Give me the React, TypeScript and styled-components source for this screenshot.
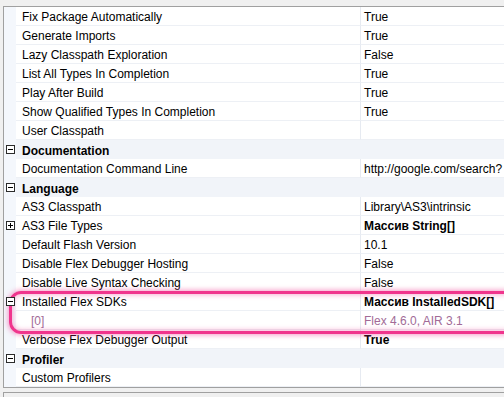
import React from "react";
import styled, { createGlobalStyle, css } from "styled-components";

const Global = createGlobalStyle`
  html, body { margin: 0; padding: 0; background: #f0f0f0; }
  body { font-family: "Liberation Sans", Arial, sans-serif; font-size: 12px; color: #000; overflow: hidden; }
`;

const Page = styled.div`
  width: 504px;
  height: 397px;
  padding: 6px 0 0 3px;
  box-sizing: border-box;
  overflow: hidden;
  display: flex;
  flex-direction: column;
  gap: 4px;
`;

const Frame = styled.div`
  position: relative;
  width: 560px;
  border-top: 1px solid #a0a0a0;
  border-left: 1px solid #a0a0a0;
  border-bottom: 1px solid #a0a0a0;
  background: #fff;
`;

const Row = styled.div<{ $cat?: boolean }>`
  display: grid;
  grid-template-columns: 12px 345px 1fr;
  height: 19px;
  ${(p) =>
    p.$cat &&
    css`
      background: #f1f4f9;
    `}
`;

const Margin = styled.div`
  background: #f4f7fc;
  display: flex;
  align-items: center;
  padding-left: 2px;
`;

const Expander = styled.div`
  width: 9px;
  height: 9px;
  box-sizing: border-box;
  border: 1px solid #2b2b2b;
  background: #fff;
  position: relative;
  z-index: 2;
  &::before {
    content: "";
    position: absolute;
    left: 1px;
    right: 1px;
    top: 3px;
    height: 1px;
    background: #000;
  }
`;

const ExpanderPlus = styled(Expander)`
  &::after {
    content: "";
    position: absolute;
    top: 1px;
    bottom: 1px;
    left: 3px;
    width: 1px;
    background: #000;
  }
`;

const cellText = css`
  display: flex;
  align-items: center;
  padding-top: 2px;
  box-sizing: border-box;
  white-space: nowrap;
  overflow: hidden;
`;

const Label = styled.div<{ $indent?: number; $muted?: boolean }>`
  ${cellText}
  padding-left: ${(p) => 6 + (p.$indent || 0)}px;
  border-bottom: 1px solid #edf0f5;
  border-right: 1px solid #e6eaf1;
  color: ${(p) => (p.$muted ? "#a26b97" : "#000")};
`;

const Value = styled.div<{ $bold?: boolean; $muted?: boolean }>`
  ${cellText}
  padding-left: 3px;
  border-bottom: 1px solid #edf0f5;
  font-weight: ${(p) => (p.$bold ? 700 : 400)};
  color: ${(p) => (p.$muted ? "#a26b97" : "#000")};
`;

const CatLabel = styled.div`
  ${cellText}
  grid-column: 2 / 4;
  padding-left: 6px;
  font-weight: 700;
`;

const Highlight = styled.div`
  position: absolute;
  z-index: 1;
  left: 5px;
  top: 284px;
  width: 600px;
  height: 43px;
  box-sizing: border-box;
  border: 3px solid #f0358d;
  border-radius: 12px;
  box-shadow: 0 0 5px 1px rgba(240, 60, 145, 0.5), inset 0 0 5px 1px rgba(240, 60, 145, 0.4);
  pointer-events: none;
`;

const HelpPane = styled.div`
  flex: 1;
  border-top: 1px solid #a0a0a0;
  border-left: 1px solid #a0a0a0;
  background: #f0f0f0;
`;

type Item =
  | { kind: "cat"; label: string }
  | {
      kind: "prop";
      label: string;
      value?: string;
      bold?: boolean;
      exp?: "+" | "-";
      sub?: boolean;
    };

const items: Item[] = [
  { kind: "prop", label: "Fix Package Automatically", value: "True" },
  { kind: "prop", label: "Generate Imports", value: "True" },
  { kind: "prop", label: "Lazy Classpath Exploration", value: "False" },
  { kind: "prop", label: "List All Types In Completion", value: "True" },
  { kind: "prop", label: "Play After Build", value: "True" },
  { kind: "prop", label: "Show Qualified Types In Completion", value: "True" },
  { kind: "prop", label: "User Classpath", value: "" },
  { kind: "cat", label: "Documentation" },
  { kind: "prop", label: "Documentation Command Line", value: "http://google.com/search?" },
  { kind: "cat", label: "Language" },
  { kind: "prop", label: "AS3 Classpath", value: "Library\\AS3\\intrinsic" },
  { kind: "prop", label: "AS3 File Types", value: "Массив String[]", bold: true, exp: "+" },
  { kind: "prop", label: "Default Flash Version", value: "10.1" },
  { kind: "prop", label: "Disable Flex Debugger Hosting", value: "False" },
  { kind: "prop", label: "Disable Live Syntax Checking", value: "False" },
  { kind: "prop", label: "Installed Flex SDKs", value: "Массив InstalledSDK[]", bold: true, exp: "-" },
  { kind: "prop", label: "[0]", value: "Flex 4.6.0, AIR 3.1", sub: true },
  { kind: "prop", label: "Verbose Flex Debugger Output", value: "True", bold: true },
  { kind: "cat", label: "Profiler" },
  { kind: "prop", label: "Custom Profilers", value: "" },
];

export default function App() {
  return (
    <>
      <Global />
      <Page>
        <Frame>
          {items.map((it, i) =>
            it.kind === "cat" ? (
              <Row key={i} $cat>
                <Margin>
                  <Expander />
                </Margin>
                <CatLabel>{it.label}</CatLabel>
              </Row>
            ) : (
              <Row key={i}>
                <Margin>
                  {it.exp === "+" && <ExpanderPlus />}
                  {it.exp === "-" && <Expander />}
                </Margin>
                <Label $indent={it.sub ? 9 : 0} $muted={it.sub}>
                  {it.label}
                </Label>
                <Value $bold={it.bold} $muted={it.sub}>
                  {it.value}
                </Value>
              </Row>
            )
          )}
          <Highlight />
        </Frame>
        <HelpPane />
      </Page>
    </>
  );
}
